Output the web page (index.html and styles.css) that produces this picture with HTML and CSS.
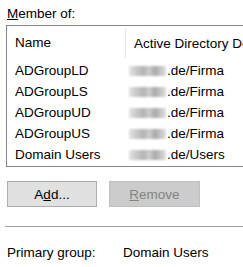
FILE: index.html
```html
<!DOCTYPE html>
<html lang="en">

<head>
    <meta charset="UTF-8">
    <title>Member Of</title>
    <link rel="stylesheet" href="styles.css">
</head>

<body>
    <div class="panel">
        <div class="caption"><u>M</u>ember of:</div>

        <div class="listbox">
            <div class="list-header">
                <div class="col col-name">Name</div>
                <div class="col col-path">Active Directory Domain Services Folder</div>
            </div>
            <div class="row">
                <div class="col col-name">ADGroupLD</div>
                <div class="col col-path"><span class="blurred"></span>.de/Firma</div>
            </div>
            <div class="row">
                <div class="col col-name">ADGroupLS</div>
                <div class="col col-path"><span class="blurred"></span>.de/Firma</div>
            </div>
            <div class="row">
                <div class="col col-name">ADGroupUD</div>
                <div class="col col-path"><span class="blurred"></span>.de/Firma</div>
            </div>
            <div class="row">
                <div class="col col-name">ADGroupUS</div>
                <div class="col col-path"><span class="blurred"></span>.de/Firma</div>
            </div>
            <div class="row">
                <div class="col col-name">Domain Users</div>
                <div class="col col-path"><span class="blurred"></span>.de/Users</div>
            </div>
        </div>

        <div class="buttons">
            <button class="btn">A<u>d</u>d...</button>
            <button class="btn" disabled><u>R</u>emove</button>
        </div>

        <hr class="separator">

        <div class="primary">
            <span class="primary-label">Primary group:</span>
            <span>Domain Users</span>
        </div>
    </div>
</body>

</html>
```

FILE: styles.css
```css
body {
    margin: 0;
    padding: 0;
    background-color: #fff;
    font-family: "Liberation Sans", Arial, sans-serif;
    font-size: 13.5px;
    color: #000;
    overflow: hidden;
}

.panel {
    padding: 6px 0 0 6px;
}

.caption {
    line-height: 16px;
    margin-left: 1px;
}

.listbox {
    margin-top: 3px;
    width: 260px;
    border: 1px solid #828790;
    padding-bottom: 1px;
    white-space: nowrap;
}

.list-header {
    display: flex;
    height: 34px;
    align-items: center;
}

.list-header .col-name {
    border-right: 1px solid #e5e5e5;
    height: 30px;
    line-height: 30px;
}

.list-header .col-path {
    padding-left: 8px;
}

.row {
    display: flex;
    height: 21px;
    align-items: center;
}

.col-name {
    width: 110px;
    padding-left: 8px;
    flex-shrink: 0;
}

.col-path {
    padding-left: 4px;
    display: flex;
    align-items: center;
}

.blurred {
    display: inline-block;
    width: 37px;
    height: 10px;
    margin-right: 1px;
    background: linear-gradient(90deg, #e4e4e4 0, #c9c9c9 20%, #b4b4b4 40%, #cfcfcf 55%, #a9a9a9 70%, #c2c6c2 85%, #e0e0e0 100%);
    filter: blur(0.8px);
}

.buttons {
    display: flex;
    gap: 12px;
    margin-top: 14px;
    margin-left: 1px;
}

.btn {
    width: 90px;
    height: 26px;
    font-family: inherit;
    font-size: 13.5px;
    color: #000;
    background-color: #e1e1e1;
    border: 1px solid #adadad;
    padding: 0;
}

.btn:disabled {
    width: 91px;
    color: #838383;
    background-color: #cccccc;
    border-color: #bfbfbf;
}

.separator {
    margin: 19px 0 0 -1px;
    border: none;
    border-top: 1px solid #a0a0a0;
    height: 0;
}

.primary {
    margin-top: 18px;
    margin-left: 1px;
    line-height: 16px;
    display: flex;
}

.primary-label {
    width: 116px;
}
```
